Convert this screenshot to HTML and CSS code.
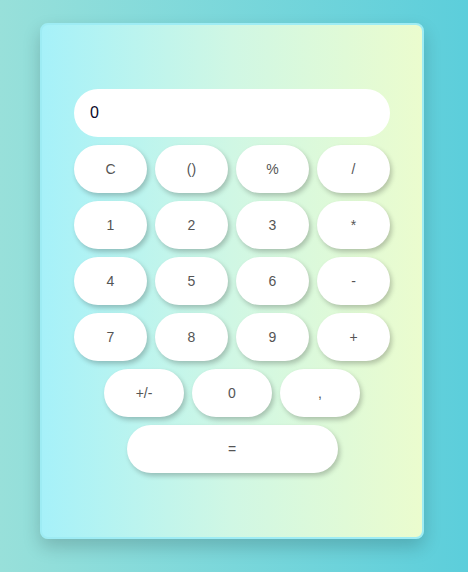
FILE: index.html
```html
<!DOCTYPE html>
<html>
<head>
<meta charset="utf-8">
<link rel="stylesheet" href="styles.css">
</head>
<body>
  <div class="calc">
    <div class="display">0</div>
    <div class="keys">
      <button class="key">C</button>
      <button class="key">()</button>
      <button class="key">%</button>
      <button class="key">/</button>
      <button class="key">1</button>
      <button class="key">2</button>
      <button class="key">3</button>
      <button class="key">*</button>
      <button class="key">4</button>
      <button class="key">5</button>
      <button class="key">6</button>
      <button class="key">-</button>
      <button class="key">7</button>
      <button class="key">8</button>
      <button class="key">9</button>
      <button class="key">+</button>
    </div>
    <div class="row">
      <button class="key wide">+/-</button>
      <button class="key wide">0</button>
      <button class="key wide">,</button>
    </div>
    <div class="row">
      <button class="key equals">=</button>
    </div>
  </div>
</body>
</html>
```

FILE: styles.css
```css
html, body {
  margin: 0;
  padding: 0;
}
body {
  width: 468px;
  height: 572px;
  box-sizing: border-box;
  padding: 23px 0 0 40px;
  background: linear-gradient(90deg, #98e0da 0%, #5ccedb 100%);
  font-family: "Liberation Sans", Arial, sans-serif;
  overflow: hidden;
}
.calc {
  box-sizing: border-box;
  width: 384px;
  height: 516px;
  border: 2px solid #9eecf4;
  border-radius: 8px;
  padding: 64px 32px 0 32px;
  background: linear-gradient(90deg, #a6f1f9 0%, #d0f7e4 50%, #ebfcce 100%);
  box-shadow: 0 8px 18px rgba(0, 0, 0, 0.18);
  display: flex;
  flex-direction: column;
  gap: 8px;
}
.display {
  height: 48px;
  border-radius: 24px;
  background: #fff;
  padding-left: 16px;
  display: flex;
  align-items: center;
  font-size: 16px;
  color: #0a0a2a;
  font-family: "Liberation Sans", Arial, sans-serif;
}
.keys {
  display: grid;
  grid-template-columns: repeat(4, 73px);
  grid-auto-rows: 48px;
  gap: 8px;
}
.row {
  display: flex;
  justify-content: center;
  gap: 8px;
}
.key {
  height: 48px;
  border: none;
  border-radius: 24px;
  background: #fff;
  color: #555;
  font-family: "Liberation Sans", Arial, sans-serif;
  font-size: 14px;
  padding: 0;
  box-shadow: 2px 3px 5px rgba(0, 0, 0, 0.22);
}
.wide {
  width: 80px;
}
.equals {
  width: 211px;
}
```
